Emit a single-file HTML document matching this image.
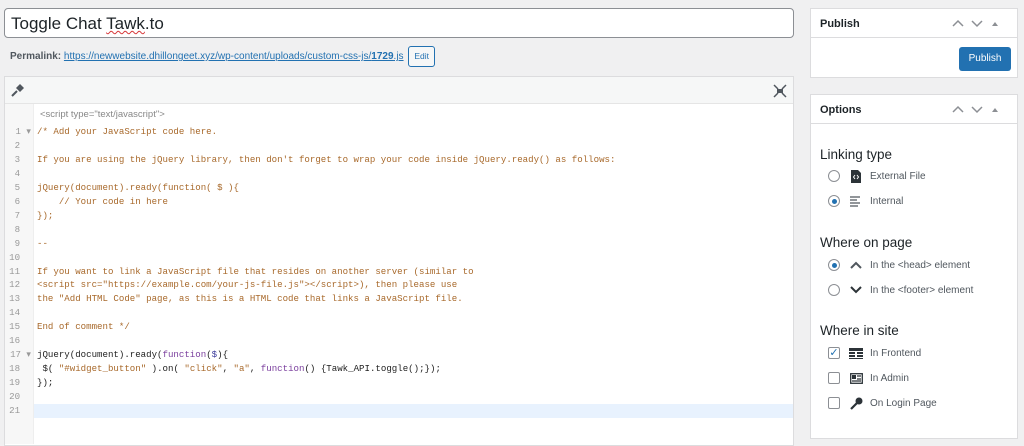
<!DOCTYPE html>
<html><head><meta charset="utf-8"><style>
*{box-sizing:border-box;margin:0;padding:0}
body{width:1024px;height:432px;overflow:hidden;background:#f0f0f1;font-family:"Liberation Sans",sans-serif;color:#1d2327;position:relative}
.abs{position:absolute}
#title{left:4px;top:8px;width:790px;height:30px;background:#fff;border:1px solid #8c8f94;border-radius:4px;font-size:17px;padding:4px 6px;line-height:22px}
#perma{left:10px;top:46px;font-size:10px;color:#50575e;line-height:16px}
#perma a{color:#2271b1;text-decoration:underline}
.edit{display:inline-block;border:1px solid #2271b1;color:#2271b1;border-radius:3px;font-size:8.5px;padding:5px 5px;margin-left:2px;background:#f6f7f7;vertical-align:middle;line-height:9px}
#ed{left:4px;top:76px;width:790px;height:370px;background:#fff;border:1px solid #dcdcde}
#tb{left:0;top:0;width:788px;height:27px;background:#f6f7f7;border-bottom:1px solid #e5e5e5}
#gut{left:0;top:27px;width:29px;height:340px;background:#f7f7f7;border-right:1px solid #eee}
.code{font-family:"Liberation Mono",monospace;font-size:9.1px;line-height:13.95px;white-space:pre}
#lines{left:0;top:48px;width:26px;text-align:right;color:#999}
#src{left:32px;top:48px;color:#222}
.c{color:#a8692b}.k{color:#7a3e9d}.s{color:#a8692b}.d{color:#3a3a9a}
#hl{left:29px;top:327px;width:759px;height:14px;background:#e8f2fe}
.box{background:#fff;border:1px solid #dcdcde}
.hdr{height:29px;border-bottom:1px solid #dcdcde;font-size:11px;font-weight:bold;padding:9px 9px;position:relative}
.arr{position:absolute;right:6px;top:9px}
h3{font-size:13.5px;font-weight:normal;color:#1d2327;position:absolute;left:9px}
.opt{position:absolute;left:17px;font-size:10px;color:#50575e;display:flex;align-items:center;height:14px}
.rad{width:12px;height:12px;border:1px solid #8c8f94;border-radius:50%;margin-right:9px;position:relative;background:#fff}
.rad.on:after{content:"";position:absolute;left:2.5px;top:2.5px;width:5px;height:5px;border-radius:50%;background:#2271b1}
.chk{width:12px;height:12px;border:1px solid #8c8f94;border-radius:2px;margin-right:9px;position:relative;background:#fff;font-size:11px;line-height:10px;color:#2271b1;text-align:center}
.ic{width:14px;height:12px;margin-right:7px;display:inline-flex;justify-content:center;align-items:center}
</style></head><body>
<div id="title" class="abs">Toggle Chat <span style="text-decoration:underline wavy #d63638;text-decoration-thickness:1px">Tawk</span>.to</div>
<div id="perma" class="abs"><b>Permalink:</b> <a>https://newwebsite.dhillongeet.xyz/wp-content/uploads/custom-css-js/<b>1729</b>.js</a> <span class="edit">Edit</span></div>
<div id="ed" class="abs">
<div id="tb" class="abs">
<svg class="abs" style="left:6px;top:6px" width="14" height="14" viewBox="0 0 14 14"><path d="M1 13 L6 8" stroke="#50575e" stroke-width="2"/><path d="M5 5 L9 1 L13 5 L9 9 Z" fill="#50575e"/></svg>
<svg class="abs" style="left:768px;top:7px" width="14" height="14" viewBox="0 0 14 14" stroke="#50575e" stroke-width="1.5" fill="none"><path d="M1 1L5 5M13 1L9 5M1 13L5 9M13 13L9 9"/><rect x="4" y="5" width="6" height="4" fill="#50575e" stroke="none"/></svg>
</div>
<div id="gut" class="abs"></div>
<div id="hl" class="abs"></div>
<div class="abs" style="left:35px;top:32px;font-size:9.5px;color:#888">&lt;script type="text/javascript"&gt;</div>
<div id="lines" class="abs code">1 ▾
2  
3  
4  
5  
6  
7  
8  
9  
10  
11  
12  
13  
14  
15  
16  
17 ▾
18  
19  
20  
21  </div>
<div id="src" class="abs code"><span class="c">/* Add your JavaScript code here.

If you are using the jQuery library, then don't forget to wrap your code inside jQuery.ready() as follows:

jQuery(document).ready(function( $ ){
    // Your code in here
});

--

If you want to link a JavaScript file that resides on another server (similar to
&lt;script src="https://example.com/your-js-file.js"&gt;&lt;/script&gt;), then please use
the "Add HTML Code" page, as this is a HTML code that links a JavaScript file.

End of comment */</span>

jQuery(document).ready(<span class="k">function</span>(<span class="d">$</span>){
 $( <span class="s">"#widget_button"</span> ).on( <span class="s">"click"</span>, <span class="s">"a"</span>, <span class="k">function</span>() {Tawk_API.toggle();});
});
</div>
</div>

<div class="abs box" style="left:810px;top:8px;width:208px;height:70px">
<div class="hdr">Publish<svg class="arr" width="60" height="12" viewBox="0 0 60 12" fill="none" stroke="#8c8f94" stroke-width="1.5"><path d="M2 8L7 3L12 8M21 3L26 8L31 3"/><path d="M41 8L44 4L47 8Z" fill="#8c8f94" stroke="none"/></svg></div>
<div class="abs" style="right:6px;top:38px;width:52px;height:24px;background:#2271b1;border-radius:3px;color:#fff;font-size:10px;text-align:center;line-height:24px">Publish</div>
</div>

<div class="abs box" style="left:810px;top:94px;width:208px;height:345px">
<div class="hdr">Options<svg class="arr" width="60" height="12" viewBox="0 0 60 12" fill="none" stroke="#8c8f94" stroke-width="1.5"><path d="M2 8L7 3L12 8M21 3L26 8L31 3"/><path d="M41 8L44 4L47 8Z" fill="#8c8f94" stroke="none"/></svg></div>
<h3 style="top:52px">Linking type</h3>
<div class="opt" style="top:74px"><span class="rad"></span><span class="ic"><svg width="10" height="13" viewBox="0 0 10 13"><path d="M0 0H7L10 3V13H0Z" fill="#2c3338"/><path d="M4 5L2.5 7L4 9M6 5L7.5 7L6 9" stroke="#fff" stroke-width="1" fill="none"/></svg></span>External File</div>
<div class="opt" style="top:99px"><span class="rad on"></span><span class="ic"><svg width="12" height="11" viewBox="0 0 12 11" stroke="#50575e" stroke-width="1.2"><path d="M0 1H10M0 4H7M0 7H10M0 10H8"/></svg></span>Internal</div>
<h3 style="top:140px">Where on page</h3>
<div class="opt" style="top:163px"><span class="rad on"></span><span class="ic"><svg width="12" height="8" viewBox="0 0 12 8" fill="none" stroke="#50575e" stroke-width="2"><path d="M1 7L6 2L11 7"/></svg></span>In the &lt;head&gt; element</div>
<div class="opt" style="top:188px"><span class="rad"></span><span class="ic"><svg width="12" height="8" viewBox="0 0 12 8" fill="none" stroke="#2c3338" stroke-width="2"><path d="M1 1L6 6L11 1"/></svg></span>In the &lt;footer&gt; element</div>
<h3 style="top:228px">Where in site</h3>
<div class="opt" style="top:251px"><span class="chk">✓</span><span class="ic"><svg width="14" height="11" viewBox="0 0 14 11" fill="#2c3338"><rect x="0" y="0" width="14" height="3"/><rect x="0" y="4" width="6" height="2"/><rect x="8" y="4" width="6" height="2"/><rect x="0" y="7" width="6" height="2"/><rect x="8" y="7" width="6" height="2"/><rect x="0" y="10" width="14" height="1"/></svg></span>In Frontend</div>
<div class="opt" style="top:276px"><span class="chk"></span><span class="ic"><svg width="13" height="11" viewBox="0 0 13 11" fill="none" stroke="#2c3338" stroke-width="1.3"><rect x="0.7" y="0.7" width="11.6" height="9.6"/><rect x="2" y="2" width="4" height="4" fill="#2c3338" stroke="none"/><path d="M7 3H11M7 6H11M2 8H11"/></svg></span>In Admin</div>
<div class="opt" style="top:301px"><span class="chk"></span><span class="ic"><svg width="13" height="13" viewBox="0 0 13 13"><circle cx="9" cy="4" r="3.5" fill="#2c3338"/><path d="M7 6L1 12" stroke="#2c3338" stroke-width="2.2"/></svg></span>On Login Page</div>
</div>
</body></html>
